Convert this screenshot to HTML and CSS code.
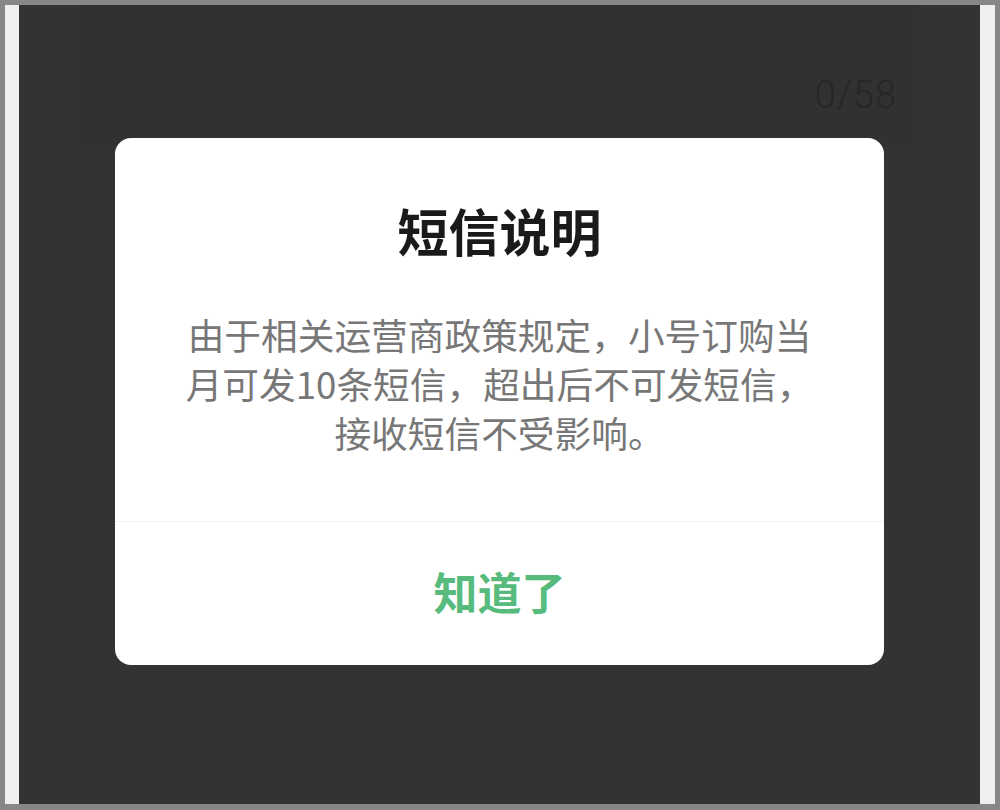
FILE: index.html
```html
<!DOCTYPE html>
<html lang="zh-CN">
<head>
<meta charset="utf-8">
<title>短信说明</title>
<link rel="stylesheet" href="styles.css">
</head>
<body>
<div class="frame">
  <div class="screen">
    <div class="panel">
      <div class="counter">0/58</div>
    </div>
    <div class="dialog">
      <div class="dialog-body">
        <h2 class="dialog-title">短信说明</h2>
        <p class="dialog-text">由于相关运营商政策规定，小号订购当月可发10条短信，超出后不可发短信，接收短信不受影响。</p>
      </div>
      <div class="dialog-footer">
        <button class="dialog-btn" type="button">知道了</button>
      </div>
    </div>
  </div>
</div>
</body>
</html>
```

FILE: styles.css
```css
html, body {
  margin: 0;
  padding: 0;
}
body {
  background: #878787;
  width: 1000px;
  height: 810px;
  overflow: hidden;
  font-family: "Noto Sans CJK SC", "Noto Sans", sans-serif;
}
.frame {
  margin: 5px 5px 0 5px;
  height: 799px;
  background: #efefef;
  padding: 0 15px 0 14px;
}
.screen {
  position: relative;
  height: 100%;
  background: #333333;
  overflow: hidden;
}
.panel {
  margin: 0 62px 0 61px;
  height: 145px;
  background: #313131;
  display: flex;
  justify-content: flex-end;
  align-items: flex-start;
  padding: 69px 21px 0 0;
  box-sizing: border-box;
}
.counter {
  font-family: Roboto, "Liberation Sans", sans-serif;
  font-weight: 300;
  font-size: 38px;
  line-height: 42px;
  letter-spacing: 1px;
  color: #262626;
}
.dialog {
  position: absolute;
  top: 133px;
  left: 96px;
  width: 769px;
  background: #ffffff;
  border-radius: 16px;
  overflow: hidden;
}
.dialog-body {
  padding: 62px 65px 64px;
  text-align: center;
  border-bottom: 1px solid #f1f1f1;
}
.dialog-title {
  margin: 0;
  font-size: 51px;
  line-height: 60px;
  font-weight: 700;
  color: #1a1a1a;
}
.dialog-text {
  margin: 50px 0 0;
  font-size: 36.7px;
  line-height: 49px;
  color: #777777;
}
.dialog-footer {
  height: 143px;
  box-sizing: border-box;
  padding-bottom: 6px;
  display: flex;
  align-items: center;
  justify-content: center;
}
.dialog-btn {
  border: 0;
  background: none;
  padding: 0;
  font-family: "Noto Sans CJK SC", "Noto Sans", sans-serif;
  font-size: 44px;
  line-height: 60px;
  font-weight: 700;
  color: #56bb7c;
}
```
